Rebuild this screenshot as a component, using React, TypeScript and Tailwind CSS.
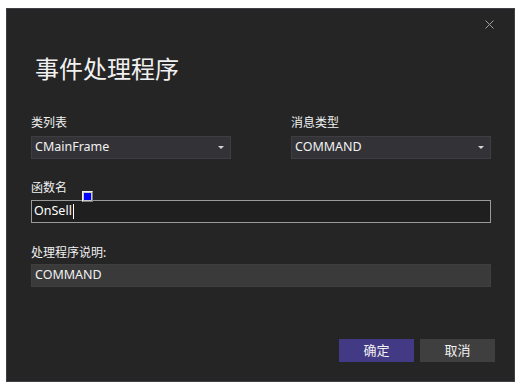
import React from 'react';

const font = { fontFamily: '"Noto Sans", "Noto Sans CJK SC", sans-serif' };

const Caret: React.FC = () => (
  <span className="ml-auto mr-[6px] block w-0 h-0 border-l-[3px] border-r-[3px] border-t-[3px] border-l-transparent border-r-transparent border-t-[#d4d4d4]" />
);

const Select: React.FC<{ value: string }> = ({ value }) => (
  <div className="mt-[5px] flex items-center h-[23px] bg-[#333337] border border-[#3e3e42] pl-[3px] text-[12.5px] text-[#f1f1f1]">
    <span>{value}</span>
    <Caret />
  </div>
);

export default function App() {
  return (
    <div className="w-[525px] h-[389px] bg-white pt-[8px] pl-[6px]" style={font}>
      <div className="w-[509px] h-[374px] bg-[#252526] border border-[#3f3f46] flex flex-col">
        {/* close */}
        <div className="flex justify-end pt-[11px] pr-[20px]">
          <svg width="9" height="9" viewBox="0 0 9 9" className="text-[#a0a0a0]">
            <path d="M0.5 0.5L8.5 8.5M8.5 0.5L0.5 8.5" stroke="currentColor" strokeWidth="1" />
          </svg>
        </div>

        <div className="pl-[24px] pr-[23px]">
          <h1 className="mt-[24px] pl-[4px] h-[32px] text-[24px] leading-[32px] text-[#f1f1f1] font-normal">事件处理程序</h1>

          <div className="mt-[30px] grid grid-cols-2 gap-x-[60px]">
            <div>
              <div className="text-[12px] leading-[16px] text-[#f1f1f1]">类列表</div>
              <Select value="CMainFrame" />
            </div>
            <div>
              <div className="text-[12px] leading-[16px] text-[#f1f1f1]">消息类型</div>
              <Select value="COMMAND" />
            </div>
          </div>

          <div className="mt-[21px] text-[12px] leading-[16px] text-[#f1f1f1]">函数名</div>
          <div className="relative mt-[4px]">
            <div className="flex items-center h-[23px] bg-[#1f1f1f] border border-[#9a9a9a] pl-[2px] text-[12.5px] text-white">
              <span>OnSell</span>
              <span className="block ml-px w-px h-[15px] bg-white" />
            </div>
            <div className="absolute left-[51px] top-[-9px] w-[11px] h-[11px] bg-[#c8c8c8] border border-t-[#f0f0f0] border-l-[#f0f0f0] border-r-[#808080] border-b-[#808080] flex items-center justify-center">
              <div className="w-[7px] h-[7px] bg-[#0000ff]" />
            </div>
          </div>

          <div className="mt-[22px] text-[12px] leading-[16px] text-[#f1f1f1]">处理程序说明:</div>
          <div className="mt-[3px] flex items-center h-[23px] bg-[#3a3a3a] border border-[#3f3f3f] pl-[3px] text-[12.5px] text-[#f1f1f1]">
            COMMAND
          </div>

          <div className="mt-[52px] -mr-[4px] flex justify-end gap-[6px]">
            <button className="w-[75px] h-[23px] bg-[#433a85] text-[13px] text-[#f1f1f1]">确定</button>
            <button className="w-[75px] h-[23px] bg-[#3f3f3f] text-[13px] text-[#f1f1f1]">取消</button>
          </div>
        </div>
      </div>
    </div>
  );
}
